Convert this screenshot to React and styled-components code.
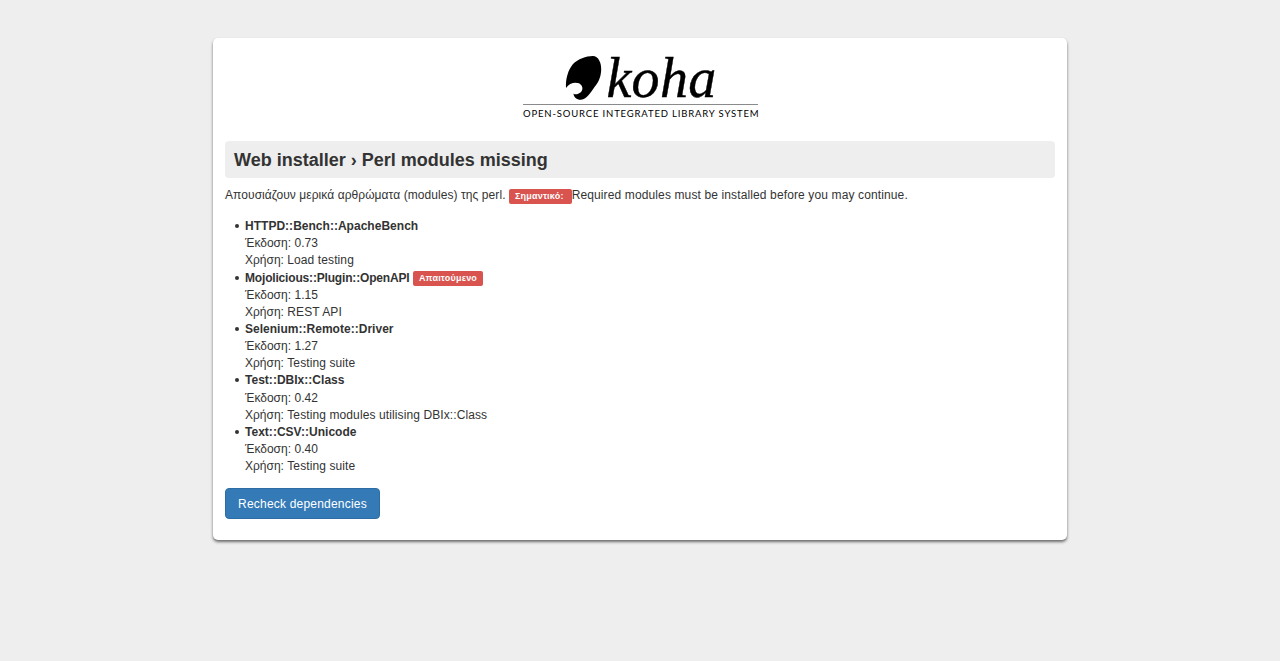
import React from 'react'
import styled, { createGlobalStyle } from 'styled-components'

const modules = [
    { name: 'HTTPD::Bench::ApacheBench', version: '0.73', usage: 'Load testing' },
    { name: 'Mojolicious::Plugin::OpenAPI', version: '1.15', usage: 'REST API', required: true },
    { name: 'Selenium::Remote::Driver', version: '1.27', usage: 'Testing suite' },
    { name: 'Test::DBIx::Class', version: '0.42', usage: 'Testing modules utilising DBIx::Class' },
    { name: 'Text::CSV::Unicode', version: '0.40', usage: 'Testing suite' },
]

const GlobalStyle = createGlobalStyle`
  html, body {
    margin: 0;
    padding: 0;
    background: #eeeeee;
  }
  body {
    font-family: "Liberation Sans", Arial, sans-serif;
    font-size: 12px;
    line-height: 1.42857;
    letter-spacing: 0.105px;
    color: #333333;
  }
  * {
    box-sizing: border-box;
  }
`

const Page = styled.div`
  min-height: 661px;
  padding-top: 38px;
`

const Card = styled.main`
  width: 854px;
  height: 502px;
  margin: 0 auto;
  padding: 17px 12px 0;
  background: #ffffff;
  border-radius: 5px;
  box-shadow: 0 2px 3px 0 rgba(0, 0, 0, 0.55);
`

const LogoWrap = styled.div`
  display: flex;
  flex-direction: column;
  align-items: center;
  height: 86px;
  padding-left: 1px;
`

const LogoTop = styled.div`
  display: flex;
  align-items: flex-start;
  gap: 4px;
  height: 46px;
`

const KohaWord = styled.span`
  font-family: "Liberation Serif", "Times New Roman", serif;
  font-style: italic;
  font-size: 56px;
  line-height: 46px;
  letter-spacing: 0.3px;
  color: #000000;
  -webkit-text-stroke: 0.4px #000000;
`

const LogoRule = styled.div`
  width: 235px;
  height: 1px;
  margin-top: 3px;
  background: #8a8a8a;
`

const LogoCaption = styled.div`
  width: 235px;
  margin-top: 3px;
  font-family: "Lato", "Open Sans", sans-serif;
  font-size: 9.5px;
  line-height: 12px;
  letter-spacing: 0.84px;
  white-space: nowrap;
  color: #000000;
`

const Heading = styled.h1`
  height: 37px;
  margin: 0 0 9px;
  padding: 0 9px;
  font-size: 18px;
  font-weight: bold;
  line-height: 39px;
  letter-spacing: 0;
  background: #eeeeee;
  border-radius: 4px;
`

const Intro = styled.p`
  margin: 0 0 14px;
  letter-spacing: 0.125px;
`

const GreekIntro = styled.span`
  letter-spacing: 0.07px;
`

const Label = styled.span`
  display: inline-block;
  padding: ${props => props.$wide ? '2px 8px 2px 6px' : '2px 6px'};
  font-size: 9px;
  font-weight: bold;
  line-height: 11px;
  letter-spacing: 0.2px;
  color: #ffffff;
  background: #d9534f;
  border-radius: 2px;
  vertical-align: ${props => props.$wide ? '0' : '1px'};
`

const ModuleList = styled.ul`
  margin: 0 0 13px;
  padding: 0 0 0 20px;
  list-style: none;
`

const ModuleItem = styled.li`
  position: relative;

  &::before {
    content: '';
    position: absolute;
    left: -10px;
    top: 6px;
    width: 4px;
    height: 4px;
    background: #333333;
    border-radius: 50%;
  }
`

const ModuleName = styled.strong`
  font-weight: bold;
  letter-spacing: ${props => props.$tight ? '-0.175px' : '0.02px'};
`

const FieldName = styled.span`
  letter-spacing: 0;
`

const RecheckButton = styled.button`
  display: block;
  width: 155px;
  height: 31px;
  padding: 0;
  font-family: inherit;
  font-size: 12px;
  letter-spacing: 0.2px;
  color: #ffffff;
  background: #337ab7;
  border: 1px solid #2e6da4;
  border-radius: 4px;
  cursor: pointer;
`

function KohaMark() {
    return (
        <svg width="38" height="46" viewBox="0 0 38 46">
            <path
                fill="#000"
                d="M28.800 1C34.500 1 37.500 8 37.200 15C36.800 23 34 28 30.500 32C27 37 23 44 17 44.800C13 45 9.500 42 9.500 38.500C11 40.500 15 38.500 16.500 37.500C19.500 35 19 30.500 15 28.300C11 26.800 5 28 2 33C1.500 24 4 15 9 9C14 4 22 1 28.800 1Z"
            />
        </svg>
    )
}

function App() {
    return (
        <Page>
            <GlobalStyle />
            <Card>
                <LogoWrap>
                    <LogoTop>
                        <KohaMark />
                        <KohaWord>koha</KohaWord>
                    </LogoTop>
                    <LogoRule />
                    <LogoCaption>OPEN-SOURCE INTEGRATED LIBRARY SYSTEM</LogoCaption>
                </LogoWrap>
                <Heading>Web installer › Perl modules missing</Heading>
                <Intro>
                    <GreekIntro>Απουσιάζουν μερικά αρθρώματα (modules) της perl. </GreekIntro><Label $wide>Σημαντικό: </Label>Required modules must be installed before you may continue.
                </Intro>
                <ModuleList>
                    {modules.map(mod => (
                        <ModuleItem key={mod.name}>
                            <ModuleName $tight={mod.required}>{mod.name}</ModuleName>
                            {mod.required && <> <Label>Απαιτούμενο</Label></>}
                            <br />
                            <FieldName>Έκδοση: </FieldName>{mod.version}
                            <br />
                            <FieldName>Χρήση: </FieldName>{mod.usage}
                        </ModuleItem>
                    ))}
                </ModuleList>
                <RecheckButton>Recheck dependencies</RecheckButton>
            </Card>
        </Page>
    )
}

export default App
